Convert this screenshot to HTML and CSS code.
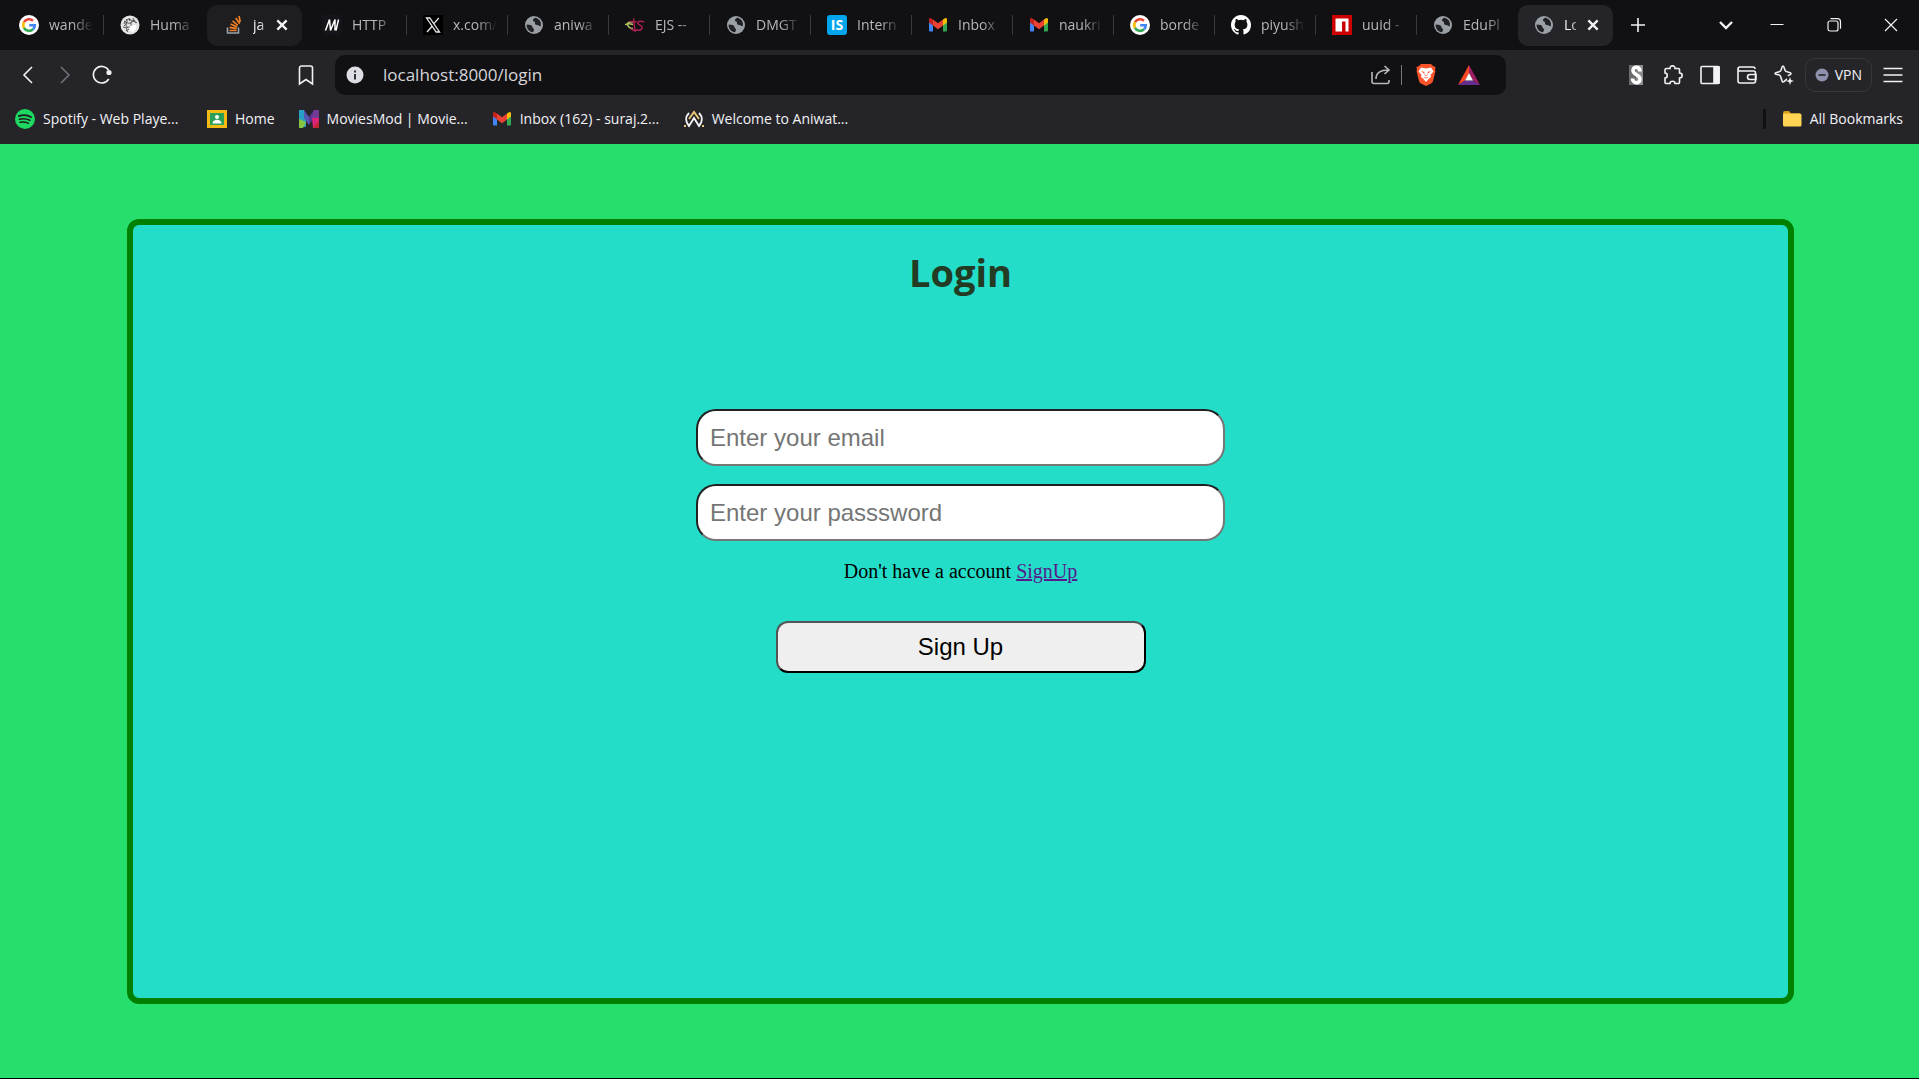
FILE: index.html
```html
<!DOCTYPE html>
<html lang="en">
<head>
<meta charset="utf-8">
<title>Login</title>
<link rel="stylesheet" href="styles.css">
</head>
<body>
<svg class="defs" aria-hidden="true">
  <symbol id="google" viewBox="0 0 20 20"><circle cx="10" cy="10" r="10" fill="#fff"/><g fill="none" stroke-width="2.6"><path d="M5 7.2A5.8 5.8 0 0 1 14 5.8" stroke="#ea4335"/><path d="M5 12.8A5.8 5.8 0 0 1 5 7.2" stroke="#fbbc05"/><path d="M14 14.3A5.8 5.8 0 0 1 5 12.8" stroke="#34a853"/><path d="M10.2 10.2H15.8A5.8 5.8 0 0 1 14 14.3" stroke="#4285f4"/></g></symbol>
  <symbol id="globe" viewBox="0 0 20 20"><circle cx="10" cy="10" r="9" fill="#9aa0a6"/><path d="M2.6 9.5c2 .2 4.600 .2 5.400 1.500s.2 2 1.400 2.600 .5 2.500-.4 3.600C5 16.800 2.400 13.500 2.600 9.500zM11 2.800c-1.500 1-2.500 2-2 3s2.200.5 2 2 .6 2.200 2.200 2.200 1.800 1.400 3.600 1.200C17.800 7 15 3.200 11 2.800z" fill="#202124"/></symbol>
  <symbol id="gmail" viewBox="0 0 20 20"><path d="M1 5v10.500a1 1 0 0 0 1 1h3V8z" fill="#4285f4"/><path d="M19 5v10.500a1 1 0 0 1-1 1h-3V8z" fill="#34a853"/><path d="M15 4.500 17 3.200c1-.6 2 .3 2 1.300v3L15 10.500z" fill="#fbbc04"/><path d="M5 4.500 3 3.200c-1-.6-2 .3-2 1.300v3l4 3z" fill="#c5221f"/><path d="M5 4.500 10 8.300l5-3.800v6L10 14.200l-5-3.700z" fill="#ea4335"/></symbol>
</svg>

<header class="browser">
  <nav class="tabs" aria-label="Tabs">
    <div class="tab"><svg class="icon"><use href="#google"/></svg><span class="label">wande</span></div>
    <div class="tab plain"><svg class="icon" viewBox="0 0 20 20"><circle cx="10" cy="10" r="9.500" fill="#e4e4e4"/><g fill="none" stroke="#444" stroke-width=".9"><path d="M4 9c1-4 5-6 7-4s-1 4-3 3-3 3-1 4 5-1 4-3 3-4 5-1M6 4c2 2 1 4-2 7M13 3c0 3 2 3 4 5M8 12c-2 1-2 3 0 5M4 6l3 2M3 12l4 1M6 16l3-2M9 3l1 3M12 6l3-1"/></g><path d="M10 11c2-1 4 0 6-1 1 3-1 6-4 7-2-1-3-3-2-6z" fill="#fff"/></svg><span class="label">Huma</span></div>
    <div class="tab hovered"><svg class="icon" viewBox="0 0 20 20"><path d="M4.500 12.500V18h11v-5.500" fill="none" stroke="#9aa5ad" stroke-width="1.600"/><g stroke="#f48024" stroke-width="1.700"><path d="M6.500 15.500h7M6.600 12.400l7 1.200M7.600 9l6.500 3M9.600 5.800l5.200 4.600M12.700 3l4 5.800M16 1l1.200 6"/></g></svg><span class="label">ja</span><button class="close" aria-label="Close tab"><svg viewBox="0 0 12 12"><path d="m2 2 8 8M10 2l-8 8"/></svg></button></div>
    <div class="tab"><svg class="icon" viewBox="0 0 20 20"><path d="M0 0h20v20H0z" fill="#15141a"/><path d="m3.500 15.500 4-11 1 11 4.500-11v11M16.500 4.500l-2.500 11" fill="none" stroke="#fff" stroke-width="1.500"/></svg><span class="label">HTTP</span></div>
    <div class="tab"><svg class="icon" viewBox="0 0 20 20"><path d="M0 0h20v20H0z" fill="#000"/><path d="M3.500 3h3.300l9.700 14h-3.300z" fill="none" stroke="#e7e9ea" stroke-width="1.300"/><path d="m4 17 5.200-5.800M15.800 3l-5 5.600" stroke="#e7e9ea" stroke-width="1.300"/></svg><span class="label">x.com/</span></div>
    <div class="tab"><svg class="icon"><use href="#globe"/></svg><span class="label">aniwa</span></div>
    <div class="tab"><svg class="icon" viewBox="0 0 20 20"><g fill="none" stroke-width="1.500"><path d="M8 7C4 6.500 1.500 8 2.500 10s3 3.500 5.500 3.500M0 9.500c3-1 5-1 8 0" stroke="#b4ca65"/><path d="M8.500 3.500 10 16l-4-2M4.500 6.500l7 .5M19 7c-3-1.500-7-1-6 1.500S18 10 17 13s-5 2.500-8 1.500" stroke="#a91e50"/></g></svg><span class="label">EJS --</span></div>
    <div class="tab"><svg class="icon"><use href="#globe"/></svg><span class="label">DMGT</span></div>
    <div class="tab"><span class="icon interns">IS</span><span class="label">Intern</span></div>
    <div class="tab"><svg class="icon"><use href="#gmail"/></svg><span class="label">Inbox</span></div>
    <div class="tab"><svg class="icon"><use href="#gmail"/></svg><span class="label">naukri</span></div>
    <div class="tab"><svg class="icon"><use href="#google"/></svg><span class="label">borde</span></div>
    <div class="tab"><svg class="icon" viewBox="0 0 16 16"><path fill="#fff" d="M8 0C3.580 0 0 3.580 0 8c0 3.540 2.290 6.530 5.470 7.590.4.070.55-.17.55-.38 0-.19-.01-.82-.01-1.490-2.010.37-2.530-.49-2.690-.94-.09-.23-.48-.94-.82-1.130-.28-.15-.68-.52-.01-.53.63-.01 1.080.58 1.230.82.72 1.210 1.870.87 2.330.66.07-.52.28-.87.51-1.070-1.780-.2-3.640-.89-3.640-3.950 0-.87.31-1.590.82-2.150-.08-.2-.36-1.020.08-2.120 0 0 .67-.21 2.200.82a7.600 7.600 0 0 1 4 0c1.530-1.040 2.200-.82 2.200-.82.44 1.100.16 1.920.08 2.120.51.56.82 1.270.82 2.150 0 3.070-1.870 3.750-3.650 3.950.29.25.54.73.54 1.480 0 1.070-.01 1.930-.01 2.200 0 .21.15.46.55.38A8 8 0 0 0 16 8c0-4.420-3.580-8-8-8z"/></svg><span class="label">piyush</span></div>
    <div class="tab"><svg class="icon" viewBox="0 0 20 20"><path d="M0 0h20v20H0z" fill="#c00"/><path d="M3.500 3.500h13v13h-3V6.500H10v10H3.500z" fill="#fff"/></svg><span class="label">uuid -</span></div>
    <div class="tab plain"><svg class="icon"><use href="#globe"/></svg><span class="label">EduPl</span></div>
    <div class="tab current"><svg class="icon"><use href="#globe"/></svg><span class="label">Lo</span><button class="close" aria-label="Close tab"><svg viewBox="0 0 12 12"><path d="m2 2 8 8M10 2l-8 8"/></svg></button></div>
    <button class="tool newtab" aria-label="New tab"><svg viewBox="0 0 20 20"><path d="M10 3v14M3 10h14"/></svg></button>
    <div class="window">
      <button class="tool search" aria-label="Search tabs"><svg viewBox="0 0 20 20"><path d="m4 7 6 6 6-6" stroke-width="2.400"/></svg></button>
      <button class="tool" aria-label="Minimize"><svg viewBox="0 0 20 20"><path d="M3.500 9.500h13" stroke-width="1"/></svg></button>
      <button class="tool" aria-label="Restore"><svg viewBox="0 0 20 20"><rect x="4" y="6" width="10" height="10" rx="2" stroke-width="1.200"/><path d="M6.500 3.700h7a3 3 0 0 1 3 3v7" stroke-width="1.200"/></svg></button>
      <button class="tool" aria-label="Close window"><svg viewBox="0 0 20 20"><path d="m4 4 12 12M16 4 4 16" stroke-width="1.200"/></svg></button>
    </div>
  </nav>

  <div class="toolbar">
    <div class="nav">
      <button class="tool" aria-label="Back"><svg viewBox="0 0 20 20"><path d="m14 2-8 8 8 8"/></svg></button>
      <button class="tool dim" aria-label="Forward"><svg viewBox="0 0 20 20"><path d="m6 2 8 8-8 8"/></svg></button>
      <button class="tool" aria-label="Reload"><svg viewBox="0 0 20 20"><path d="M16.800 14A8.300 8.300 0 1 1 16.500 5"/><circle cx="17" cy="7.500" r="1.800" class="solid"/></svg></button>
      <button class="tool mark" aria-label="Bookmark this tab"><svg viewBox="0 0 20 20"><path d="M3.500 3a2 2 0 0 1 2-2h9a2 2 0 0 1 2 2v16L10 14.500 3.500 19z"/></svg></button>
    </div>
    <div class="address">
      <svg class="icon" viewBox="0 0 20 20"><circle cx="10" cy="10" r="8.500" fill="#dddde4"/><path d="M10 9v5.500M10 5.500v2" stroke="#333" stroke-width="2"/></svg>
      <input class="url" type="text" value="localhost:8000/login" aria-label="Address">
      <button class="tool" aria-label="Share"><svg viewBox="0 0 20 20" class="soft"><path d="M1 7v9.500a2 2 0 0 0 2 2h13a2 2 0 0 0 2-2V15M5 14C5 8.500 9 5 17.500 5M13.500 1l4.500 4-4.500 4"/></svg></button>
      <span class="rule"></span>
      <button class="tool shield" aria-label="Shields"><svg viewBox="0 0 20 22"><path d="m5 0-2 2-2.500 1 .5 3-.5 1 2.500 10q.5 1.500 2 2.500l5 2.500 5-2.500q1.500-1 2-2.500l2.500-10-.5-1 .5-3L17 2l-2-2z" fill="#fb542b"/><path d="m5 3.500 5 1 5-1 2.500 4-3 3.500.5 2-2.500 2L10 18l-2.500-3L5 13l.5-2-3-3.500z" fill="#fff"/><path d="m5 7 3.500 1-1 1.200zM15 7l-3.500 1 1 1.200zM9 7l-.5 4 1.500 1 1.500-1L11 7v4H9zM7 13l3 1.500 3-1.500-3 .6z" fill="#fb542b"/></svg></button>
      <button class="tool shield" aria-label="Rewards"><svg viewBox="0 0 22 20"><path d="M11 0 0 20l7-4.500 4-7.500z" fill="#ff4724"/><path d="m11 0 11 20-7-4.500L11 8z" fill="#9e1f63"/><path d="M0 20h22l-7-4.500H7z" fill="#662d91"/><path d="m11 8 4 7.500H7z" fill="#fff"/></svg></button>
    </div>
    <div class="actions">
      <button class="tool" aria-label="S extension"><svg viewBox="0 0 20 20"><path d="M3 0h7v20H3z" fill="#6c6c6e" stroke="none"/><path d="M10 0h7v20h-7z" fill="#8c8c8e" stroke="none"/><path d="M14 6.500C14 1 7 1 7 5.500S14 9.500 14 14.200s-7.500 4.800-7.500-.7" stroke="#fff" stroke-width="3.600"/></svg></button>
      <button class="tool" aria-label="Extensions"><svg viewBox="0 0 20 20"><path d="M3.500 3.500H7C6.500 0 12.500 0 12 3.500h3.500q1 0 1 1V8c3.500 0 3.500 5 0 5v4.500q0 1-1 1H12c0-3-5-3-5 0H3q-1 0-1-1V13c3 0 3-5 0-5V5q0-1.500 1.500-1.500z"/></svg></button>
      <button class="tool" aria-label="Sidebar"><svg viewBox="0 0 20 20"><rect x="1" y="1.500" width="18" height="17" rx="1"/><path class="solid" d="M14 2h5v16h-5z"/></svg></button>
      <button class="tool" aria-label="Wallet"><svg viewBox="0 0 20 20"><path d="M1 4v12a2 2 0 0 0 2 2h13.500a2 2 0 0 0 2-2V8a2 2 0 0 0-2-2H3a2 2 0 0 1 0-4h13a2 2 0 0 1 2 2M19 9.500h-6a2.500 2.500 0 0 0 0 5h6z"/></svg></button>
      <button class="tool" aria-label="Leo AI"><svg viewBox="0 0 20 20"><path d="M13 14c-1 .5-2.500 3-4 3-1.500 0-1.500-5-3-6.500S1 10 1 8.500 5 7.500 6.500 6 7.500 1 9 1s1 3.500 2.500 5S17 7 17 8.500 14.500 10 14 11"/><path class="solid" d="m16 12 1 3 3 1-3 1-1 3-1-3-3-1 3-1z" stroke-width="0"/></svg></button>
      <button class="vpn"><svg viewBox="0 0 14 14"><circle cx="7" cy="7" r="6.500" fill="#8f90ae"/><path d="M3.500 7h7" stroke="#252529" stroke-width="1.600"/></svg>VPN</button>
      <button class="tool" aria-label="Menu"><svg viewBox="0 0 20 20"><path d="M.5 3.500h19M.5 10h19M.5 16.500h19"/></svg></button>
    </div>
  </div>

  <nav class="bookmarks" aria-label="Bookmarks">
    <a class="long" href="#spotify"><svg class="icon" viewBox="0 0 20 20"><circle cx="10" cy="10" r="10" fill="#1ed760"/><g fill="none" stroke="#1c1c1f" stroke-linecap="round"><path d="M4 7c4-1.300 8.500-1 12 1" stroke-width="1.900"/><path d="M4.500 10.300c3.500-1 7-.7 10.300 1" stroke-width="1.600"/><path d="M5 13.300c3-.7 5.500-.5 8.500 1" stroke-width="1.400"/></g></svg>Spotify - Web Playe...</a>
    <a href="#home"><svg class="icon" viewBox="0 0 20 20"><path d="M0 1h20v18H0z" fill="#f4b912"/><path d="M3 4h14v12H3z" fill="#2c9f59"/><circle cx="10" cy="8" r="2" fill="#fff"/><path d="M5.500 14.500c0-5 9-5 9 0z" fill="#fff"/></svg>Home</a>
    <a class="long" href="#moviesmod"><svg class="icon" viewBox="0 0 20 20"><path d="M0 1h5l2 5v12H0z" fill="#2a9fc4"/><path d="m0 10 7 3-3 6H0z" fill="#86c440"/><path d="m5 1 5 7v8L5 9z" fill="#5557b5"/><path d="m15 1-5 7v8l5-7z" fill="#5a3696"/><path d="M15 1h5v8h-7z" fill="#713b96"/><path d="M13 9h7v10h-6z" fill="#dd2476"/><path d="m20 12-6 7h6z" fill="#c22631"/></svg>MoviesMod | Movie...</a>
    <a class="long" href="#inbox"><svg class="icon"><use href="#gmail"/></svg>Inbox (162) - suraj.2...</a>
    <a class="long" href="#aniwatch"><svg class="icon" viewBox="0 0 20 20"><g fill="none" stroke="#f4f4f4" stroke-width="1.900"><path d="M5 4C1 8 1.500 13 5 17l5-8 5 8c3.500-4 4-9 0-13"/><path d="m5 10 5-7 5 7" stroke="#edc778"/></g><path d="M0 16h2v2H0zM18 16h2v2h-2z" fill="#edc778"/></svg>Welcome to Aniwat...</a>
    <a class="all" href="#all"><svg class="icon" viewBox="0 0 20 20"><path d="M1 4a2 2 0 0 1 2-2h4l2 2.500h9V10H1z" fill="#d99a1c"/><rect x="1" y="4.500" width="18.500" height="13" rx="1.500" fill="#ffd453"/></svg>All Bookmarks</a>
  </nav>
</header>

<main class="page">
  <section class="card">
    <h1>Login</h1>
    <form class="form">
      <input class="field" type="email" placeholder="Enter your email" aria-label="Email">
      <input class="field" type="password" placeholder="Enter your passsword" aria-label="Password">
      <p class="hint">Don't have a account <a href="#signup">SignUp</a></p>
      <button class="submit" type="submit">Sign Up</button>
    </form>
  </section>
</main>
</body>
</html>
```
FILE: styles.css
```css
* { box-sizing: border-box; }

body {
  margin: 0;
  min-height: 100vh;
  display: flex;
  flex-direction: column;
  border-bottom: 1px solid #000;
  font-family: "Liberation Serif", "Times New Roman", serif;
}

.defs { display: none; }

/* Browser chrome */
.browser {
  background: #252529;
  color: #f2f2f5;
  font: 14px/20px "Open Sans", "Segoe UI", sans-serif;
}

.browser button {
  padding: 0;
  border: 0;
  background: none;
  color: inherit;
  font: inherit;
}

.icon {
  flex: none;
  width: 20px;
  height: 20px;
}

.interns {
  border-radius: 3px;
  background: #00a5ec;
  color: #fff;
  font-weight: 700;
  text-align: center;
}

.tool {
  flex: none;
  display: flex;
  width: 20px;
}

.tool svg,
.close svg {
  width: 100%;
  overflow: visible;
  fill: none;
  stroke: currentColor;
  stroke-width: 1.600;
}

.tool .solid { fill: currentColor; }
.tool .soft { stroke: #b9b9be; }
.browser .dim { color: #707075; }
.tool.shield svg { stroke: none; }

.tabs {
  display: flex;
  align-items: center;
  height: 50px;
  padding-left: 3px;
  background: #111113;
}

.tab {
  flex: 0 1 101px;
  min-width: 0;
  height: 41px;
  display: flex;
  align-items: center;
  gap: 10px;
  padding: 0 8px 0 16px;
  color: #b8b8bc;
  background: linear-gradient(#3a3a3e, #3a3a3e) right center / 1px 20px no-repeat;
}

.tab.plain { background: none; }

.label {
  flex: 1;
  min-width: 0;
  overflow: hidden;
  white-space: nowrap;
  mask-image: linear-gradient(to right, #000 24px, transparent 44px);
}

.tab.hovered,
.tab.current {
  flex-basis: 95px;
  padding-right: 13px;
  background: #1e1e20;
  border-radius: 10px;
  color: #f2f2f5;
}

.tab.hovered { margin: 0 4px 0 2px; }
.tab.current { background: #252529; }

.tab.hovered .label,
.tab.current .label { mask-image: linear-gradient(to right, #000 6px, transparent 20px); }

.close {
  flex: none;
  display: flex;
  width: 14px;
}

.close svg { stroke-width: 2; }

.newtab { margin-left: 15px; }

.window {
  display: flex;
  gap: 37px;
  margin-left: auto;
  padding-right: 18px;
}

.search { margin-right: -6px; }

.toolbar {
  display: flex;
  align-items: center;
  height: 50px;
}

.nav {
  flex: none;
  display: flex;
  align-items: center;
  gap: 17px;
  width: 335px;
  padding: 0 19px 0 18px;
}

.nav .mark { margin-left: auto; }

.address {
  flex: 1;
  display: flex;
  align-items: center;
  gap: 10px;
  height: 40px;
  padding: 0 26px 0 10px;
  border-radius: 10px;
  background: #111113;
}

.url {
  flex: 1;
  min-width: 0;
  margin-left: 8px;
  padding: 0;
  border: 0;
  background: none;
  color: #d6d6da;
  font: 17px/24px "Open Sans", "Segoe UI", sans-serif;
}

.rule {
  width: 1px;
  height: 20px;
  margin-right: 4px;
  background: #77777c;
}

.shield + .shield {
  width: 22px;
  margin-left: 12px;
}

.actions {
  flex: none;
  display: flex;
  align-items: center;
  gap: 17px;
  margin-left: 120px;
  padding-right: 16px;
}

.browser .vpn {
  display: flex;
  align-items: center;
  gap: 6px;
  height: 34px;
  margin: 0 -6px;
  padding: 0 9px;
  border: 1px solid #36363b;
  border-radius: 10px;
}

.vpn svg { width: 14px; }

.bookmarks {
  display: flex;
  align-items: center;
  gap: 24px;
  height: 44px;
  padding: 0 16px 6px 15px;
}

.bookmarks a {
  display: flex;
  align-items: center;
  gap: 8px;
  color: inherit;
  text-decoration: none;
  white-space: nowrap;
}

.bookmarks .long { min-width: 168px; }

.bookmarks .all {
  margin-left: auto;
  padding-left: 16px;
  border-left: 3px solid #111113;
}

/* Login page */
.page {
  flex: 1;
  display: flex;
  justify-content: center;
  padding: 75px 0 74px 2px;
  background: #25de6b;
}

.card {
  width: 87%;
  border: 6px solid green;
  border-radius: 12px;
  background: #23ddc9;
}

.card h1 {
  margin: 20px 0 110px;
  color: #223b22;
  font: 700 38px/54px "Gill Sans MT", "Open Sans", sans-serif;
  text-align: center;
}

.form {
  display: flex;
  flex-direction: column;
  align-items: center;
}

.field {
  width: 529px;
  max-width: 90%;
  height: 57px;
  margin-bottom: 18px;
  padding: 0 12px;
  border: 2px inset #767676;
  border-radius: 20px;
  background: #fff;
  font: 24px/28px "Liberation Sans", Arial, sans-serif;
}

.field::placeholder { color: #757575; }

.hint {
  margin: 0 0 38px;
  color: #000;
  font-size: 20px;
  line-height: 24px;
}

.hint a { color: #551a8b; }

.submit {
  width: 370px;
  max-width: 80%;
  height: 52px;
  padding: 0;
  border: 2px outset #000;
  border-radius: 12px;
  background: #efefef;
  color: #000;
  font: 24px/28px "Liberation Sans", Arial, sans-serif;
}
```
